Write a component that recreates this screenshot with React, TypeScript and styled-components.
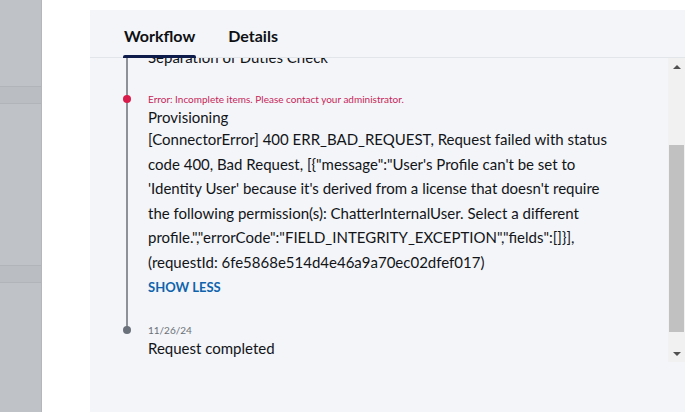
import React, { useEffect, useRef } from 'react';
import styled, { createGlobalStyle } from 'styled-components';

const GlobalStyle = createGlobalStyle`
  html, body {
    margin: 0;
    padding: 0;
    background: #ffffff;
    font-family: Lato, "Noto Sans", Arial, sans-serif;
    color: #121418;
  }
`;

interface Step {
  meta: string;
  title: string;
  tone: 'error' | 'done';
  lines?: string[];
}

const steps: Step[] = [
  { meta: '11/26/24', title: 'Separation of Duties Check', tone: 'done' },
  {
    meta: 'Error: Incomplete items. Please contact your administrator.',
    title: 'Provisioning',
    tone: 'error',
    lines: [
      '[ConnectorError] 400 ERR_BAD_REQUEST, Request failed with status',
      'code 400, Bad Request, [{"message":"User\'s Profile can\'t be set to',
      '\'Identity User\' because it\'s derived from a license that doesn\'t require',
      'the following permission(s): ChatterInternalUser. Select a different',
      'profile.","errorCode":"FIELD_INTEGRITY_EXCEPTION","fields":[]}],',
      '(requestId: 6fe5868e514d4e46a9a70ec02dfef017)',
    ],
  },
  { meta: '11/26/24', title: 'Request completed', tone: 'done' },
];

const Page = styled.div`
  display: flex;
  height: 412px;
  overflow: hidden;
`;

const Backdrop = styled.div`
  width: 41px;
  flex-shrink: 0;
  background: #bfc2c6;
  border-right: 1px solid #b3b6ba;
  display: flex;
  flex-direction: column;
`;

const BackdropRow = styled.div<{ $h: number }>`
  height: ${(p) => p.$h}px;
  flex-shrink: 0;
  border-bottom: 1px solid #b1b4b8;
  background: ${(p) => (p.$h < 20 ? '#babdc1' : 'transparent')};
`;

const Drawer = styled.div`
  flex: 1;
  background: #ffffff;
  padding: 10px 5px 0 48px;
  display: flex;
`;

const Panel = styled.section`
  flex: 1;
  background: #f3f5f8;
  display: flex;
  flex-direction: column;
`;

const TabBar = styled.div`
  height: 47px;
  display: flex;
  gap: 33px;
  padding-left: 34px;
  border-bottom: 1px solid #e2e5e9;
`;

const Tab = styled.div<{ $active?: boolean }>`
  position: relative;
  display: flex;
  align-items: center;
  padding-top: 3px;
  font-size: 16px;
  font-weight: 700;
  color: #0e1014;

  &::after {
    content: '';
    display: ${(p) => (p.$active ? 'block' : 'none')};
    position: absolute;
    left: -1px;
    right: -1px;
    bottom: -1px;
    height: 3px;
    border-radius: 2px 2px 0 0;
    background: #0d1c4a;
  }
`;

const Body = styled.div`
  height: 304px;
  display: flex;
`;

const Viewport = styled.div`
  flex: 1;
  overflow: hidden;
`;

const Timeline = styled.ol`
  list-style: none;
  margin: 0;
  padding: 0 0 40px 33px;
  display: flex;
  flex-direction: column;
  gap: 24px;
`;

const Item = styled.li<{ $last?: boolean }>`
  position: relative;
  padding-left: 25px;

  &::before {
    content: '';
    display: ${(p) => (p.$last ? 'none' : 'block')};
    position: absolute;
    left: 3px;
    top: 8px;
    bottom: -32px;
    width: 2px;
    background: #8d9299;
  }
`;

const Dot = styled.span<{ $tone: 'error' | 'done' }>`
  position: absolute;
  left: 0;
  top: 4px;
  width: 8px;
  height: 8px;
  border-radius: 50%;
  background: ${(p) => (p.$tone === 'error' ? '#d81b4a' : '#6a717a')};
`;

const Meta = styled.div<{ $tone: 'error' | 'done' }>`
  font-size: 10px;
  line-height: 16px;
  color: ${(p) => (p.$tone === 'error' ? '#c7265a' : '#6b7078')};
`;

const Title = styled.div`
  font-size: 15px;
  line-height: 20px;
  color: #121418;
`;

const Detail = styled.p`
  margin: 0;
  font-size: 15px;
  line-height: 24.5px;
  color: #121418;
  white-space: nowrap;
`;

const ToggleLink = styled.button`
  display: block;
  border: none;
  background: none;
  padding: 0;
  margin-top: 2px;
  font-family: inherit;
  font-size: 13px;
  line-height: 22px;
  font-weight: 700;
  color: #0f63ad;
  cursor: pointer;
`;

const ScrollTrack = styled.div`
  width: 17px;
  background: #f1f1f1;
  display: flex;
  flex-direction: column;
`;

const ScrollButton = styled.div<{ $down?: boolean }>`
  height: 17px;
  display: flex;
  align-items: center;
  justify-content: center;

  &::after {
    content: '';
    width: 0;
    height: 0;
    border-left: 4px solid transparent;
    border-right: 4px solid transparent;
    ${(p) => (p.$down ? 'border-top: 4px solid #505050;' : 'border-bottom: 4px solid #505050;')}
  }
`;

const Thumb = styled.div`
  margin: 70px 1px 13px 1px;
  flex: 1;
  background: #c1c1c1;
`;

const Filler = styled.div`
  flex: 1;
`;

export default function App() {
  const viewportRef = useRef<HTMLDivElement>(null);

  useEffect(() => {
    if (viewportRef.current) viewportRef.current.scrollTop = 27;
  }, []);

  return (
    <>
      <GlobalStyle />
      <Page>
        <Backdrop>
          <BackdropRow $h={86} />
          <BackdropRow $h={16} />
          <BackdropRow $h={161} />
          <BackdropRow $h={16} />
        </Backdrop>
        <Drawer>
          <Panel>
            <TabBar>
              <Tab $active>Workflow</Tab>
              <Tab>Details</Tab>
            </TabBar>
            <Body>
              <Viewport ref={viewportRef}>
                <Timeline>
                  {steps.map((step, i) => (
                    <Item key={step.title} $last={i === steps.length - 1}>
                      <Dot $tone={step.tone} />
                      <Meta $tone={step.tone}>{step.meta}</Meta>
                      <Title>{step.title}</Title>
                      {step.lines && (
                        <>
                          <Detail>
                            {step.lines.map((line, j) => (
                              <React.Fragment key={j}>
                                {line}
                                {j < step.lines!.length - 1 && <br />}
                              </React.Fragment>
                            ))}
                          </Detail>
                          <ToggleLink>SHOW LESS</ToggleLink>
                        </>
                      )}
                    </Item>
                  ))}
                </Timeline>
              </Viewport>
              <ScrollTrack>
                <ScrollButton />
                <Thumb />
                <ScrollButton $down />
              </ScrollTrack>
            </Body>
            <Filler />
          </Panel>
        </Drawer>
      </Page>
    </>
  );
}
